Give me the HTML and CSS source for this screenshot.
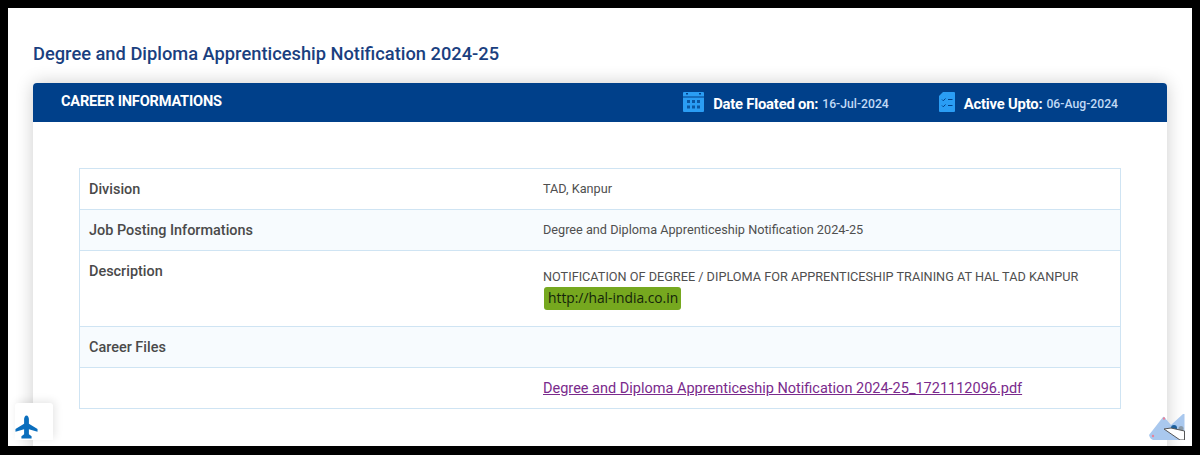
FILE: index.html
```html
<!DOCTYPE html>
<html lang="en">
<head>
  <meta charset="UTF-8" />
  <meta name="viewport" content="width=device-width, initial-scale=1.0"/>
  <title>Career Informations</title>
  <link rel="stylesheet" href="styles.css">
</head>
<body>

<div class="frame">
  <h2 class="page-title">Degree and Diploma Apprenticeship Notification 2024-25</h2>

  <div class="card">
    <div class="card-head">
      <div class="card-title">CAREER INFORMATIONS</div>
      <div class="head-dates">
        <div class="head-date">
          <svg class="head-icon icon-cal" width="21" height="20" viewBox="0 0 21 20">
            <path fill="#2a9df4" d="M1 0h19a1 1 0 0 1 1 1v18a1 1 0 0 1-1 1H1a1 1 0 0 1-1-1V1a1 1 0 0 1 1-1z"/>
            <path fill="#00408a" d="M0 4.500h21v1H0zM3 1h2v1.500H3zM16 1h2v1.500h-2z"/>
            <path fill="#00408a" opacity=".75" d="M4 8h3v3H4zM9 8h3v3H9zM14 8h3v3h-3zM4 13.500h3v3H4zM9 13.500h3v3H9zM14 13.500h3v3h-3z"/>
          </svg>
          <b>Date Floated on:</b> <span>16-Jul-2024</span>
        </div>
        <div class="head-date">
          <svg class="head-icon icon-doc" width="16" height="20" viewBox="0 0 16 20">
            <path fill="#2a9df4" d="M4 0h11a1 1 0 0 1 1 1v18a1 1 0 0 1-1 1H1a1 1 0 0 1-1-1V4z"/>
            <path fill="none" stroke="#00408a" stroke-width="1" d="M3 7.500l1.300 1.300L6.500 6.500M3 13.500l1.300 1.300 2.200-2.300M9 7.500h4.500M9 13.500h4.500"/>
          </svg>
          <b>Active Upto:</b> <span>06-Aug-2024</span>
        </div>
      </div>
    </div>

    <div class="card-body">
      <table class="info-table">
        <tr>
          <th>Division</th>
          <td>TAD, Kanpur</td>
        </tr>
        <tr>
          <th>Job Posting Informations</th>
          <td>Degree and Diploma Apprenticeship Notification 2024-25</td>
        </tr>
        <tr>
          <th>Description</th>
          <td class="desc">
            NOTIFICATION OF DEGREE / DIPLOMA FOR APPRENTICESHIP TRAINING AT HAL TAD KANPUR
            <span class="site-link">http://hal-india.co.in</span>
          </td>
        </tr>
        <tr>
          <th>Career Files</th>
          <td></td>
        </tr>
        <tr>
          <th></th>
          <td class="file-cell"><a class="file-link" href="#">Degree and Diploma Apprenticeship Notification 2024-25_1721112096.pdf</a></td>
        </tr>
      </table>
    </div>
  </div>

  <div class="plane-tab">
    <svg width="23" height="25" viewBox="0 0 24 25">
      <path fill="#0a6ebd" d="M12 0c1.500 0 2.500 2 2.500 4v4.500L23.500 14v3l-9-2.700v5.200l2.800 2.200V24H6.700v-2.300l2.800-2.200v-5.200l-9 2.700v-3l9-5.500V4c0-2 1-4 2.500-4z"/>
    </svg>
  </div>

  <svg class="corner-art" width="36" height="26" viewBox="0 0 36 26">
    <path fill="#a9c8ee" d="M0 21 14 3q1-1 2 1l6 7L34 0h1.500v26H4q-3-1-4-5z"/>
    <circle cx="15" cy="4.500" r="1.200" fill="#e9839a"/>
    <circle cx="4" cy="22" r="1.200" fill="#e9839a"/>
    <circle cx="25" cy="14" r="3" fill="#1c5f9c"/>
    <circle cx="32" cy="14.500" r="2.500" fill="#8a9aa8"/>
    <path fill="#fff" stroke="#555" d="M15 15l7-1 13.500 3v9H31z"/>
  </svg>
</div>

</body>
</html>
```

FILE: styles.css
```css
html, body {
  height: 100%;
}
body {
  margin: 0;
  background: #000;
  font-family: Roboto, Arial, sans-serif;
  padding: 8px;
  box-sizing: border-box;
  overflow: hidden;
}
.frame {
  position: relative;
  background: white;
  height: 438px;
  overflow: hidden;
  padding: 0 25px;
}
.page-title {
  margin: 0;
  padding-top: 35px;
  height: 40px;
  font-size: 18.3px;
  line-height: 22px;
  font-weight: 500;
  color: #1a3f7f;
}
.card {
  border-radius: 4px 4px 0 0;
  box-shadow: 0 0 18px rgba(0,0,0,0.2);
  height: 420px;
}
.card-head {
  display: flex;
  justify-content: space-between;
  align-items: center;
  height: 39px;
  background: #00408a;
  border-radius: 4px 4px 0 0;
  padding: 0 49px 0 28px;
  color: white;
}
.card-title {
  font-size: 14.6px;
  font-weight: 700;
  letter-spacing: -0.2px;
  margin-top: -3px;
}
.head-dates {
  display: flex;
  gap: 50px;
  padding-top: 2px;
}
.head-date {
  display: flex;
  align-items: center;
  gap: 4px;
  font-size: 14.8px;
}
.head-date b {
  font-weight: 700;
  letter-spacing: -0.2px;
}
.head-date span {
  font-size: 12.2px;
  font-weight: 500;
  color: #c0daf6;
}
.head-icon {
  margin-top: -3px;
}
.icon-cal {
  margin-right: 5px;
}
.icon-doc {
  margin-right: 5px;
}
.card-body {
  padding: 46px 46px 0;
}
.info-table {
  width: 100%;
  border-collapse: collapse;
  border: 1px solid #cfe4f3;
}
.info-table tr {
  height: 41px;
  border-bottom: 1px solid #cfe4f3;
}
.info-table tr:nth-child(even) {
  background: #f7fbfe;
}
.info-table th {
  width: 445px;
  padding: 0 9px;
  text-align: left;
  font-size: 14.45px;
  font-weight: 500;
  color: #4a4a4a;
  vertical-align: middle;
}
.info-table td {
  padding: 0 0 2px;
  font-size: 12.7px;
  color: #4f4f4f;
  vertical-align: middle;
}
.info-table tr:nth-child(3) th {
  vertical-align: top;
  padding-top: 12px;
}
.desc {
  line-height: 16px;
}
.info-table td.desc {
  padding: 18px 0 16px;
}
.info-table td.file-cell {
  padding: 0;
}
.site-link {
  display: block;
  width: max-content;
  margin: 2px 0 0 1px;
  padding: 2px 3px 3px 4px;
  background: #76a81f;
  border-radius: 3px;
  font-family: "Open Sans", sans-serif;
  font-size: 13.8px;
  line-height: 18px;
  color: #14240a;
}
.file-link {
  font-size: 14.5px;
  color: #7a2a8c;
}
.plane-tab {
  position: absolute;
  left: 7px;
  bottom: 6px;
  width: 38px;
  height: 37px;
  background: white;
  border-radius: 3px 3px 0 0;
  box-shadow: 2px -2px 8px rgba(0,0,0,0.1);
  display: flex;
  align-items: flex-end;
}
.corner-art {
  position: absolute;
  right: 7px;
  bottom: 6px;
}
```
